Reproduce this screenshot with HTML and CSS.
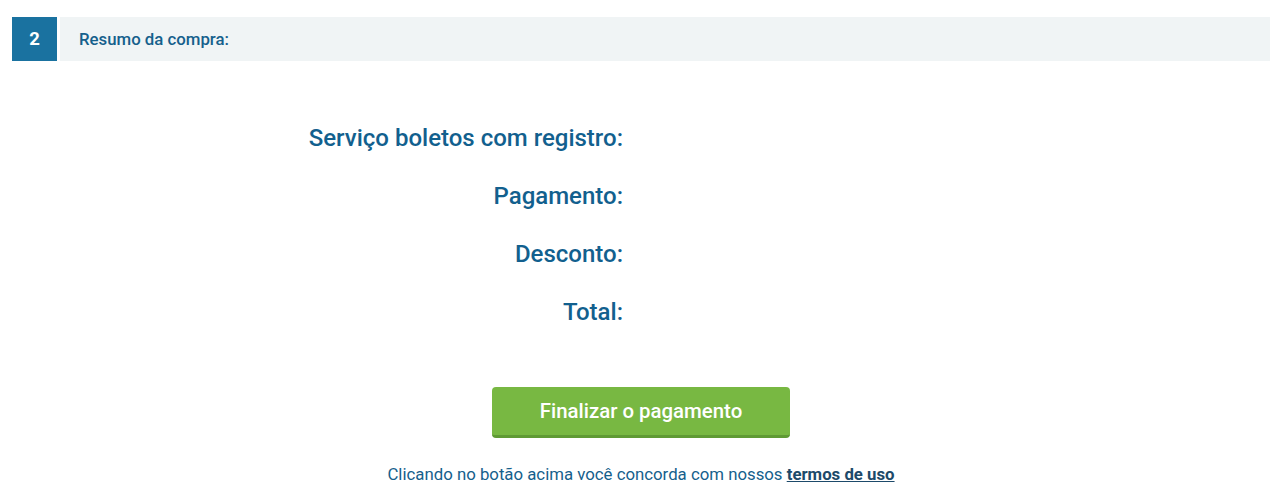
FILE: index.html
```html
<!DOCTYPE html>
<html lang="pt-BR">
<head>
<meta charset="utf-8">
<title>Resumo da compra</title>
<link rel="stylesheet" href="styles.css">
</head>
<body>
<div class="page">
  <div class="step-header">
    <div class="step-num">2</div>
    <div class="step-title">Resumo da compra:</div>
  </div>
  <div class="summary">
    <div class="label">Serviço boletos com registro:</div><div class="value"></div>
    <div class="label">Pagamento:</div><div class="value"></div>
    <div class="label">Desconto:</div><div class="value"></div>
    <div class="label">Total:</div><div class="value"></div>
  </div>
  <div class="actions">
    <button class="btn-finish" type="button">Finalizar o pagamento</button>
    <p class="terms">Clicando no botão acima você concorda com nossos <a href="#" class="terms-link">termos de uso</a></p>
  </div>
</div>
</body>
</html>
```

FILE: styles.css
```css
html, body {
  margin: 0;
  padding: 0;
  background: #ffffff;
  font-family: Roboto, "Liberation Sans", sans-serif;
}
.page {
  padding: 17px 14px 0 12px;
}
.step-header {
  display: flex;
  gap: 3px;
  height: 44px;
}
.step-num {
  width: 45px;
  background: #1a72a0;
  color: #ffffff;
  font-weight: 700;
  font-size: 18.5px;
  display: flex;
  align-items: center;
  justify-content: center;
}
.step-title {
  flex: 1;
  background: #f0f4f5;
  color: #15608c;
  font-weight: 500;
  font-size: 16.8px;
  display: flex;
  align-items: center;
  padding-left: 19px;
}
.summary {
  display: grid;
  grid-template-columns: 1fr 1fr;
  column-gap: 36px;
  row-gap: 30px;
  margin-top: 63px;
}
.label {
  text-align: right;
  color: #12608e;
  font-weight: 500;
  font-size: 24px;
  line-height: 28px;
}
.actions {
  display: flex;
  flex-direction: column;
  align-items: center;
  margin-top: 61px;
}
.btn-finish {
  width: 298px;
  height: 51px;
  border: 0;
  border-bottom: 3px solid #5f9a34;
  border-radius: 4px;
  background: #78b842;
  color: #ffffff;
  font-family: Roboto, "Liberation Sans", sans-serif;
  font-weight: 500;
  font-size: 20.4px;
  padding: 0 0 1px;
  cursor: pointer;
}
.terms {
  margin: 26px 0 0;
  font-size: 16.8px;
  color: #15608c;
}
.terms-link {
  color: #1d4a6a;
  font-weight: 700;
}
```
